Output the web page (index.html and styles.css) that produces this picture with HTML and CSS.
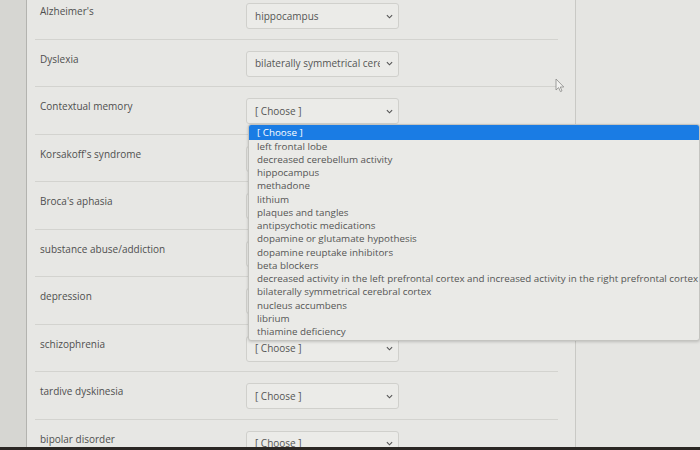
FILE: index.html
```html
<!DOCTYPE html>
<html>
<head>
<meta charset="utf-8">
<link rel="stylesheet" href="styles.css">
</head>
<body>
<div class="screen">
  <div class="edge"></div>
  <div class="main">
    <div class="rows">
      <div class="row"><div class="label">Alzheimer's</div><div class="sel"><span class="val">hippocampus</span><svg class="chev" viewBox="0 0 8 5"><path d="M1 1 L4 4 L7 1"/></svg></div></div>
      <div class="row"><div class="label">Dyslexia</div><div class="sel"><span class="val">bilaterally symmetrical cerebral cortex</span><svg class="chev" viewBox="0 0 8 5"><path d="M1 1 L4 4 L7 1"/></svg></div></div>
      <div class="row"><div class="label">Contextual memory</div><div class="sel open"><span class="val">[ Choose ]</span><svg class="chev" viewBox="0 0 8 5"><path d="M1 1 L4 4 L7 1"/></svg>
        <ul class="list">
          <li class="hl">[ Choose ]</li>
          <li>left frontal lobe</li>
          <li>decreased cerebellum activity</li>
          <li>hippocampus</li>
          <li>methadone</li>
          <li>lithium</li>
          <li>plaques and tangles</li>
          <li>antipsychotic medications</li>
          <li>dopamine or glutamate hypothesis</li>
          <li>dopamine reuptake inhibitors</li>
          <li>beta blockers</li>
          <li>decreased activity in the left prefrontal cortex and increased activity in the right prefrontal cortex</li>
          <li>bilaterally symmetrical cerebral cortex</li>
          <li>nucleus accumbens</li>
          <li>librium</li>
          <li>thiamine deficiency</li>
        </ul>
      </div></div>
      <div class="row"><div class="label">Korsakoff's syndrome</div><div class="sel"><span class="val">[ Choose ]</span><svg class="chev" viewBox="0 0 8 5"><path d="M1 1 L4 4 L7 1"/></svg></div></div>
      <div class="row"><div class="label">Broca's aphasia</div><div class="sel"><span class="val">[ Choose ]</span><svg class="chev" viewBox="0 0 8 5"><path d="M1 1 L4 4 L7 1"/></svg></div></div>
      <div class="row"><div class="label">substance abuse/addiction</div><div class="sel"><span class="val">[ Choose ]</span><svg class="chev" viewBox="0 0 8 5"><path d="M1 1 L4 4 L7 1"/></svg></div></div>
      <div class="row"><div class="label">depression</div><div class="sel"><span class="val">[ Choose ]</span><svg class="chev" viewBox="0 0 8 5"><path d="M1 1 L4 4 L7 1"/></svg></div></div>
      <div class="row"><div class="label">schizophrenia</div><div class="sel"><span class="val">[ Choose ]</span><svg class="chev" viewBox="0 0 8 5"><path d="M1 1 L4 4 L7 1"/></svg></div></div>
      <div class="row"><div class="label">tardive dyskinesia</div><div class="sel"><span class="val">[ Choose ]</span><svg class="chev" viewBox="0 0 8 5"><path d="M1 1 L4 4 L7 1"/></svg></div></div>
      <div class="row"><div class="label">bipolar disorder</div><div class="sel"><span class="val">[ Choose ]</span><svg class="chev" viewBox="0 0 8 5"><path d="M1 1 L4 4 L7 1"/></svg></div></div>
    </div>
    <svg class="cursor" viewBox="0 0 10 15"><path d="M1 1 L1 12 L3.6 9.6 L5.4 13.6 L7 12.9 L5.3 9 L8.8 9 Z"/></svg>
  </div>
  <div class="rest"></div>
</div>
<div class="bezel"></div>
</body>
</html>
```
FILE: styles.css
```css
html, body {
  margin: 0;
  padding: 0;
}
body {
  width: 700px;
  height: 450px;
  overflow: hidden;
  background: #e5e5e2;
  font-family: "Open Sans", "DejaVu Sans", sans-serif;
  color: #4d4d4d;
}
.screen {
  display: flex;
  height: 447px;
  overflow: hidden;
}
.edge {
  flex: 0 0 26px;
  background: #d6d6d2;
  border-right: 1px solid #b3b3af;
}
.main {
  position: relative;
  flex: 0 0 548px;
  border-right: 1px solid #c9c9c5;
  background: #e7e7e4;
}
.rest {
  flex: 1;
  background: #e5e5e2;
}
.rows {
  margin-top: -8px;
  margin-left: 8px;
  margin-right: 17px;
}
.row {
  display: flex;
  align-items: flex-start;
  height: 47.5px;
  box-sizing: border-box;
  padding-top: 12px;
  padding-left: 5px;
  border-bottom: 1px solid #d3d3cf;
  font-size: 10px;
}
.label {
  flex: 0 0 206px;
  line-height: 15px;
  color: #4f4f4f;
}
.sel {
  position: relative;
  flex: 0 0 153px;
  width: 153px;
  min-width: 0;
  height: 26px;
  box-sizing: border-box;
  display: flex;
  align-items: center;
  padding-left: 8px;
  padding-right: 5px;
  margin-top: -1px;
  background: #ebebe8;
  border: 1px solid #d0d0cc;
  border-radius: 3px;
}
.val {
  flex: 1 1 auto;
  min-width: 0;
  white-space: nowrap;
  overflow: hidden;
  color: #555;
  line-height: 15px;
}
.chev {
  flex: 0 0 7px;
  width: 7px;
  height: 5px;
  margin-left: 6px;
}
.chev path {
  fill: none;
  stroke: #555;
  stroke-width: 1.3;
}
.list {
  position: absolute;
  top: 25px;
  left: 1px;
  width: 450px;
  margin: 0;
  padding: 0 0 2px 0;
  list-style: none;
  background: #eaeae7;
  border: 1px solid #c4c4c0;
  border-radius: 3px;
  box-shadow: 0 1px 3px rgba(0,0,0,0.18);
  z-index: 5;
}
.list li {
  height: 13.27px;
  line-height: 14px;
  padding-left: 8px;
  font-size: 9.8px;
  color: #555;
  white-space: nowrap;
}
.list li.hl {
  height: 14.5px;
  line-height: 16px;
  background: #1a7ce4;
  color: #ffffff;
  border-radius: 2px 2px 0 0;
}
.cursor {
  position: absolute;
  left: 528px;
  top: 78px;
  width: 10px;
  height: 15px;
}
.cursor path {
  fill: #f2f2f0;
  stroke: #8a8a88;
  stroke-width: 0.8;
}
.bezel {
  height: 3px;
  background: #2b2724;
}
```
